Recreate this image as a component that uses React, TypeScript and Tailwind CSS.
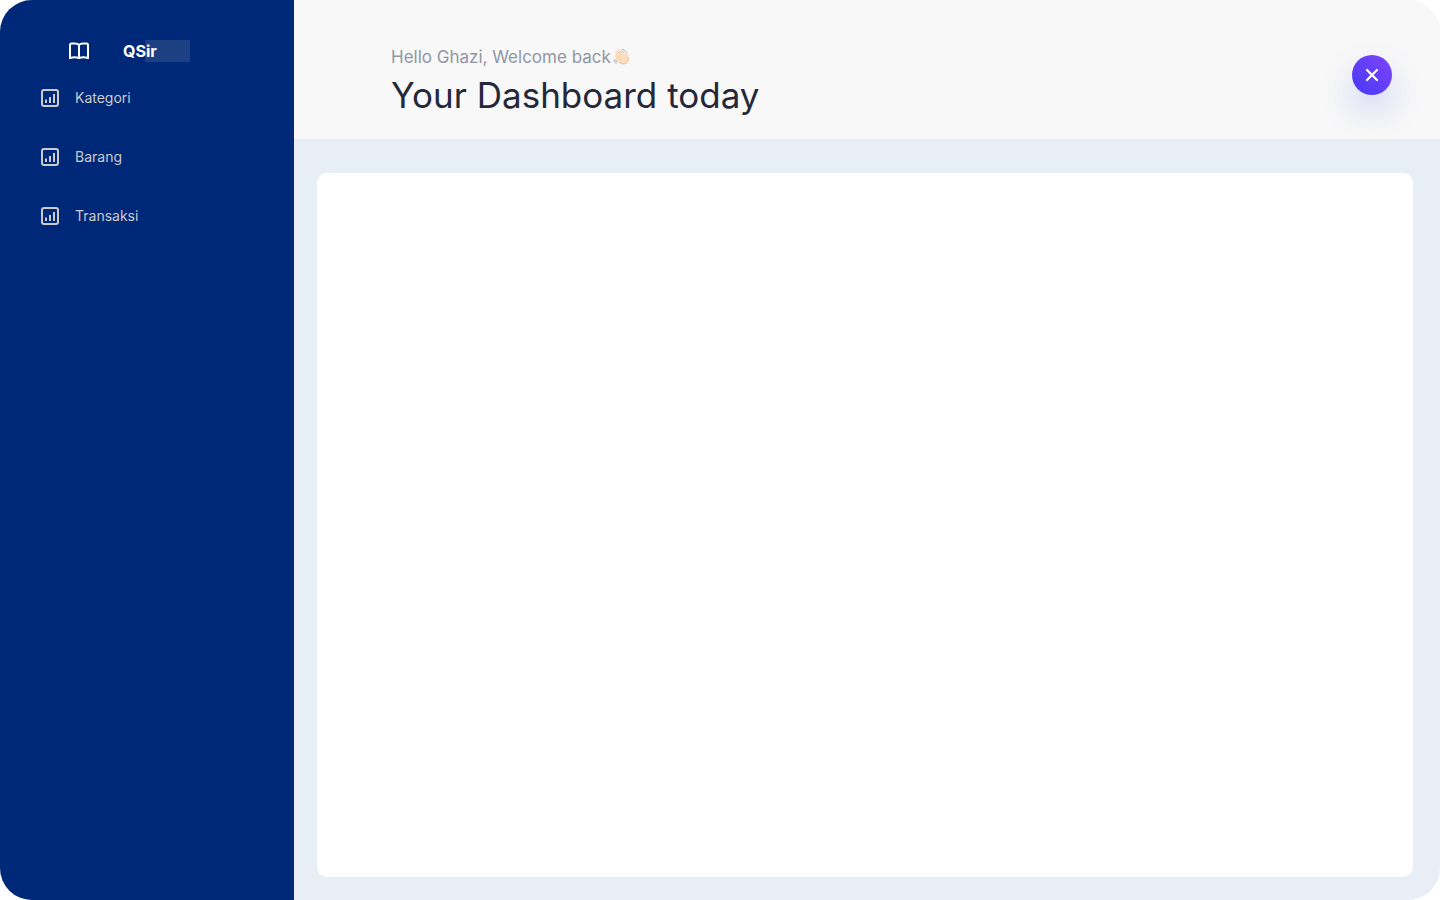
function BookIcon() {
  return (
    <svg viewBox="0 0 24 24" fill="none" stroke="currentColor" strokeWidth="2" strokeLinejoin="round" className="size-6" aria-hidden="true">
      <path d="M12 6C11.200 5 9.800 4.500 8 4.500H4.500C3.500 4.500 3 5 3 6v13.200C5.800 18 9.500 18 12 19.200c2.500-1.200 6.200-1.200 9 0V6c0-1-.5-1.500-1.500-1.500H16c-1.800 0-3.200.5-4 1.500z" />
      <path d="M12 6V19" />
    </svg>
  );
}

function ChartIcon() {
  return (
    <svg viewBox="0 0 20 20" fill="none" stroke="currentColor" className="size-5 shrink-0" aria-hidden="true">
      <rect x="2" y="2" width="16" height="16" rx="2" strokeWidth="2" />
      <path d="M6 11.500V15M10 9v6M14 6v9" strokeWidth="2" />
    </svg>
  );
}

function WavingHand() {
  return (
    <svg viewBox="0 0 18 18" className="size-[18px]" role="img" aria-label="Waving hand">
      <path
        d="M3.200 3.400c.7-.7 1.300-.5 1.900.1L4.700 2.700c-.4-1 .8-1.800 1.700-1.100l4.500 4.500.8.300.4-2.500c.2-1.300 1.500-1.600 2.200-.8.7.8.2 2.100.5 3.300l.9 3.500c.6 3.200-1.900 6.600-5.300 6.500-2 0-3.500-.9-4.800-2.200L2.600 11.400c-.9-1 .1-2.100 1-1.500L2 8.200C1.200 7.100 2.200 6 3.200 6.700L2.700 5.500C2.300 4.700 2.500 4 3.200 3.400z"
        fill="#fbdcbd"
      />
      <path d="M5.100 3.500l3.600 3.800M3.400 6.700l3.300 3.300M3.800 10l2 2" fill="none" stroke="#efc7a1" strokeWidth=".6" strokeLinecap="round" />
      <path d="M15.600 9.500c.7 3.700-1.900 6.500-5.200 6.400-1.800 0-3.200-.8-4.300-1.900" fill="none" stroke="#e9bf99" strokeWidth=".9" strokeLinecap="round" />
      <path d="M9.500 1.200c1.300.2 2.100.9 2.500 2M8.700 2.800c.8.200 1.300.7 1.600 1.400M.9 12c.2 1.500.9 2.500 2.300 3M2.500 12.100c.3.700.7 1.200 1.400 1.600" fill="none" stroke="#a0a6ae" strokeWidth="1" strokeLinecap="round" />
    </svg>
  );
}

const links = ["Kategori", "Barang", "Transaksi"];

export default function App() {
  return (
    <div className="flex min-h-screen overflow-hidden rounded-[32px] bg-[#e7eef6] font-['Inter','Liberation_Sans',sans-serif]">
      <aside className="w-[294px] shrink-0 bg-[#002878] px-10 pt-10">
        <a href="#home" className="ml-[27px] flex h-[22px] items-center text-white">
          <BookIcon />
          <span className="ml-8 flex h-[22px] w-[67px] items-center bg-linear-to-r from-transparent from-[22px] to-[#1d4083] to-[22px] text-base leading-[22px] font-bold">
            QSir
          </span>
        </a>
        <nav className="mt-[26px]">
          <ul className="flex flex-col gap-[39px]">
            {links.map((label) => (
              <li key={label}>
                <a href={`#${label.toLowerCase()}`} className="flex h-5 items-center gap-[15px] text-sm text-[#cbcbcb]">
                  <ChartIcon />
                  {label}
                </a>
              </li>
            ))}
          </ul>
        </nav>
      </aside>
      <div className="flex min-w-0 grow flex-col">
        <header className="flex h-[139px] shrink-0 items-start justify-between bg-[#f8f8f8] pr-12 pl-[97px]">
          <div className="pt-[45px]">
            <p className="flex items-center gap-0.5 text-[17px] leading-6 text-[#9295a6]">
              Hello Ghazi, Welcome back <WavingHand />
            </p>
            <h1 className="mt-1 text-[35px] leading-[44px] text-[#25283a]">Your Dashboard today</h1>
          </div>
          <button
            type="button"
            aria-label="Close"
            className="mt-[55px] flex size-10 items-center justify-center rounded-full bg-linear-to-tr from-[#4338f5] to-[#8043fb] text-white shadow-[0_16px_32px_rgba(80,100,235,0.24)]"
          >
            <svg viewBox="0 0 20 20" fill="none" stroke="currentColor" strokeWidth="2.200" strokeLinecap="round" className="size-5" aria-hidden="true">
              <path d="M5 5l10 10M15 5L5 15" />
            </svg>
          </button>
        </header>
        <main className="flex grow flex-col pt-[34px] pr-[27px] pb-[23px] pl-[23px]">
          <section aria-label="Dashboard content" className="grow rounded-[10px] bg-white" />
        </main>
      </div>
    </div>
  );
}
